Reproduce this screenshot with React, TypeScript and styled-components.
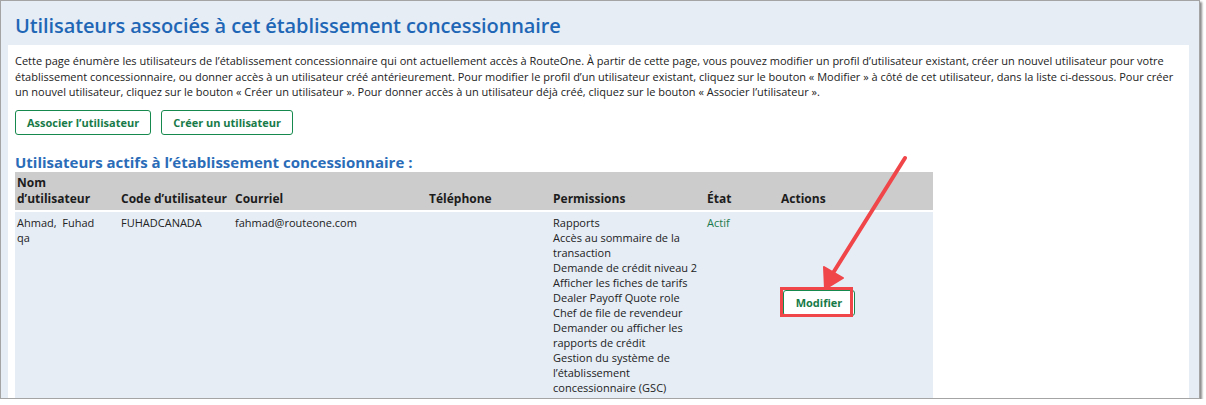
import React from "react";
import styled, { createGlobalStyle } from "styled-components";

const Global = createGlobalStyle`
  html, body { margin: 0; padding: 0; background: #ffffff; }
  body { font-family: "Open Sans", "Noto Sans", Arial, sans-serif; color: #222; }
  * { box-sizing: border-box; }
`;

const Frame = styled.div`
  position: relative;
  width: 1200px;
  height: 399px;
  border: 1px solid #a4a4a4;
  box-shadow: 2px 2px 2px rgba(0, 0, 0, 0.45);
  background: #e6edf5;
  overflow: hidden;
  display: flex;
  flex-direction: column;
`;

const TitleBar = styled.div`
  flex: 0 0 44px;
  padding: 11px 14px 0;
`;

const Title = styled.h1`
  margin: 0;
  font-size: 20px;
  line-height: 28px;
  font-weight: 600;
  color: #1f67b6;
  letter-spacing: -0.1px;
`;

const Panel = styled.div`
  flex: 1 0 auto;
  margin: 0 10px 0 7px;
  background: #ffffff;
  padding: 8px 5px 0 7px;
`;

const Intro = styled.p`
  margin: 0;
  font-size: 11px;
  line-height: 15.5px;
  color: #222;
`;

const ButtonRow = styled.div`
  display: flex;
  gap: 10px;
  margin-top: 10px;
`;

const GreenButton = styled.button`
  height: 25px;
  padding: 0 11px;
  border: 1px solid #168a4e;
  border-radius: 3px;
  background: #ffffff;
  color: #177a48;
  font-family: inherit;
  font-size: 11px;
  font-weight: 700;
  cursor: pointer;
`;

const SectionTitle = styled.h2`
  margin: 17px 0 0;
  font-size: 15px;
  line-height: 20px;
  font-weight: 700;
  color: #2a6cb8;
`;

const Table = styled.table`
  width: 918px;
  border-collapse: collapse;
  table-layout: fixed;
  font-size: 11px;
`;

const HeadCell = styled.th<{ $w: number }>`
  width: ${(p) => p.$w}px;
  background: #cccccc;
  text-align: left;
  vertical-align: bottom;
  padding: 3px 2px 3px;
  font-size: 12px;
  line-height: 16px;
  font-weight: 700;
  color: #1c1c1c;
  border-bottom: 2px solid #ffffff;
`;

const Cell = styled.td<{ $middle?: boolean; $green?: boolean; $pr?: number }>`
  background: #e6edf5;
  vertical-align: ${(p) => (p.$middle ? "middle" : "top")};
  padding: 3px ${(p) => p.$pr ?? 6}px 4px 2px;
  line-height: 15px;
  color: ${(p) => (p.$green ? "#1b7a4c" : "#222")};
`;

const PermList = styled.ul`
  list-style: none;
  margin: 0;
  padding: 0;
`;

const ActionWrap = styled.div`
  position: relative;
  display: inline-block;
  margin: 0 0 4px 2px;
`;

const EditButton = styled(GreenButton)`
  height: 26px;
  width: 72px;
  padding: 0;
  font-size: 11px;
`;

const Highlight = styled.span`
  position: absolute;
  left: -3px;
  top: -3px;
  width: 73px;
  height: 30px;
  border: 3px solid #f0464a;
  pointer-events: none;
`;

const Arrow = styled.svg`
  position: absolute;
  left: 810px;
  top: 150px;
  pointer-events: none;
`;

const columns = [
  { label: "Nom d’utilisateur", w: 104 },
  { label: "Code d’utilisateur", w: 114 },
  { label: "Courriel", w: 194 },
  { label: "Téléphone", w: 124 },
  { label: "Permissions", w: 154 },
  { label: "État", w: 74 },
  { label: "Actions", w: 154 },
];

const permissions = [
  "Rapports",
  "Accès au sommaire de la transaction",
  "Demande de crédit niveau 2",
  "Afficher les fiches de tarifs",
  "Dealer Payoff Quote role",
  "Chef de file de revendeur",
  "Demander ou afficher les rapports de crédit",
  "Gestion du système de l’établissement concessionnaire (GSC)",
];

export default function App() {
  return (
    <>
      <Global />
      <Frame>
        <TitleBar>
          <Title>Utilisateurs associés à cet établissement concessionnaire</Title>
        </TitleBar>
        <Panel>
          <Intro>
            Cette page énumère les utilisateurs de l’établissement concessionnaire qui ont actuellement accès à RouteOne. À partir de cette page, vous pouvez modifier un profil d’utilisateur existant, créer un nouvel utilisateur pour votre établissement concessionnaire, ou donner accès à un utilisateur créé antérieurement. Pour modifier le profil d’un utilisateur existant, cliquez sur le bouton « Modifier » à côté de cet utilisateur, dans la liste ci-dessous. Pour créer un nouvel utilisateur, cliquez sur le bouton « Créer un utilisateur ». Pour donner accès à un utilisateur déjà créé, cliquez sur le bouton « Associer l’utilisateur ».
          </Intro>
          <ButtonRow>
            <GreenButton>Associer l’utilisateur</GreenButton>
            <GreenButton>Créer un utilisateur</GreenButton>
          </ButtonRow>
          <SectionTitle>Utilisateurs actifs à l’établissement concessionnaire :</SectionTitle>
          <Table>
            <thead>
              <tr>
                {columns.map((c) => (
                  <HeadCell key={c.label} $w={c.w}>
                    {c.label}
                  </HeadCell>
                ))}
              </tr>
            </thead>
            <tbody>
              <tr>
                <Cell $pr={14}>Ahmad,&nbsp; Fuhad qa</Cell>
                <Cell>FUHADCANADA</Cell>
                <Cell>fahmad@routeone.com</Cell>
                <Cell></Cell>
                <Cell>
                  <PermList>
                    {permissions.map((p) => (
                      <li key={p}>{p}</li>
                    ))}
                  </PermList>
                </Cell>
                <Cell $green>Actif</Cell>
                <Cell $middle>
                  <ActionWrap>
                    <EditButton>Modifier</EditButton>
                    <Highlight />
                  </ActionWrap>
                </Cell>
              </tr>
            </tbody>
          </Table>
        </Panel>
        <Arrow width="110" height="150" viewBox="0 0 110 150">
          <line x1="94" y1="7" x2="22" y2="122" stroke="#f0464a" strokeWidth="4" strokeLinecap="round" />
          <polygon points="14,138 13,116 32,127" fill="#f0464a" stroke="#f0464a" strokeWidth="2" strokeLinejoin="round" />
        </Arrow>
      </Frame>
    </>
  );
}
